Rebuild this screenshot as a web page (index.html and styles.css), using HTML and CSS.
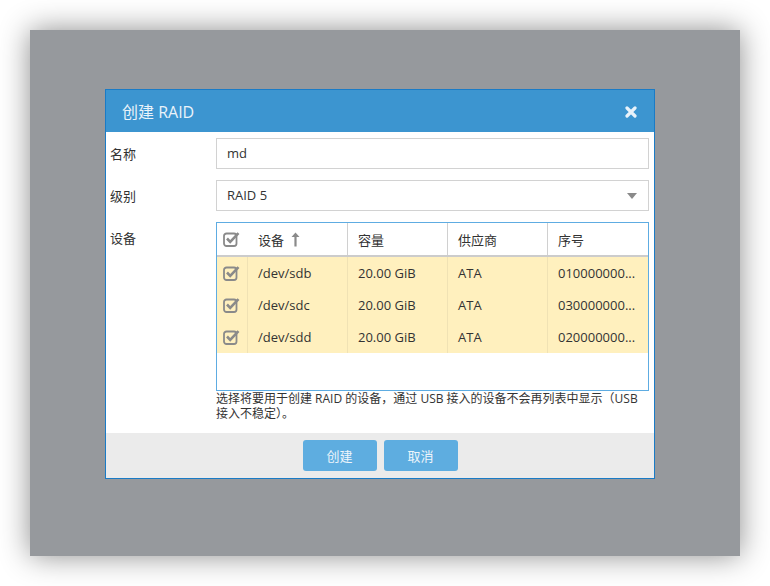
FILE: index.html
```html
<!DOCTYPE html>
<html>
<head>
<meta charset="utf-8">
<link rel="stylesheet" href="styles.css">
</head>
<body>
<div class="stage">
  <div class="dialog">
    <div class="dlg-head">
      <span class="dlg-title">创建 RAID</span>
      <svg class="close" width="12" height="12" viewBox="0 0 12 12"><path d="M2 2 L10 10 M10 2 L2 10" stroke="#e8f2fa" stroke-width="3.2" stroke-linecap="round"/></svg>
    </div>
    <div class="dlg-body">
      <div class="row">
        <div class="label">名称</div>
        <div class="field"><div class="input">md</div></div>
      </div>
      <div class="row">
        <div class="label">级别</div>
        <div class="field"><div class="input select"><span>RAID 5</span><span class="caret"></span></div></div>
      </div>
      <div class="row">
        <div class="label">设备</div>
        <div class="field">
          <div class="table">
            <div class="thead">
              <div class="c c0"><svg class="chk" width="17" height="16" viewBox="0 0 17 16"><rect x="1" y="2.5" width="12.5" height="12.5" rx="2.5" fill="none" stroke="#8a8a8a" stroke-width="1.8"/><path d="M4 7.5 L7.2 10.8 L15.5 2.2" fill="none" stroke="#8a8a8a" stroke-width="2.6"/></svg></div>
              <div class="c">设备<svg class="sort" width="9" height="15" viewBox="0 0 9 15"><path d="M4.5 0.5 L8.5 5 L5.6 5 L5.6 14.5 L3.4 14.5 L3.4 5 L0.5 5 Z" fill="#8a8a8a"/></svg></div>
              <div class="c">容量</div>
              <div class="c">供应商</div>
              <div class="c last">序号</div>
            </div>
            <div class="tr">
              <div class="c c0"><svg class="chk" width="17" height="16" viewBox="0 0 17 16"><rect x="1" y="2.5" width="12.5" height="12.5" rx="2.5" fill="none" stroke="#8a8a8a" stroke-width="1.8"/><path d="M4 7.5 L7.2 10.8 L15.5 2.2" fill="none" stroke="#8a8a8a" stroke-width="2.6"/></svg></div>
              <div class="c">/dev/sdb</div>
              <div class="c">20.00 GiB</div>
              <div class="c">ATA</div>
              <div class="c last">010000000...</div>
            </div>
            <div class="tr">
              <div class="c c0"><svg class="chk" width="17" height="16" viewBox="0 0 17 16"><rect x="1" y="2.5" width="12.5" height="12.5" rx="2.5" fill="none" stroke="#8a8a8a" stroke-width="1.8"/><path d="M4 7.5 L7.2 10.8 L15.5 2.2" fill="none" stroke="#8a8a8a" stroke-width="2.6"/></svg></div>
              <div class="c">/dev/sdc</div>
              <div class="c">20.00 GiB</div>
              <div class="c">ATA</div>
              <div class="c last">030000000...</div>
            </div>
            <div class="tr">
              <div class="c c0"><svg class="chk" width="17" height="16" viewBox="0 0 17 16"><rect x="1" y="2.5" width="12.5" height="12.5" rx="2.5" fill="none" stroke="#8a8a8a" stroke-width="1.8"/><path d="M4 7.5 L7.2 10.8 L15.5 2.2" fill="none" stroke="#8a8a8a" stroke-width="2.6"/></svg></div>
              <div class="c">/dev/sdd</div>
              <div class="c">20.00 GiB</div>
              <div class="c">ATA</div>
              <div class="c last">020000000...</div>
            </div>
          </div>
          <div class="help">选择将要用于创建 RAID 的设备，通过 USB 接入的设备不会再列表中显示（USB 接入不稳定）。</div>
        </div>
      </div>
    </div>
    <div class="dlg-foot">
      <button class="btn">创建</button>
      <button class="btn">取消</button>
    </div>
  </div>
</div>
</body>
</html>
```
FILE: styles.css
```css
html, body {
  margin: 0;
  padding: 0;
  background: #ffffff;
}
body {
  width: 770px;
  height: 586px;
  overflow: hidden;
  font-family: "Open Sans", "Noto Sans CJK SC", sans-serif;
  font-size: 13px;
  color: #333;
}
.stage {
  margin: 30px 0 0 30px;
  width: 710px;
  height: 526px;
  background: #96999d;
  box-shadow: 0 0 28px rgba(0, 0, 0, 0.45);
  padding: 59px 0 0 75px;
  box-sizing: border-box;
}
.dialog {
  width: 550px;
  height: 390px;
  box-sizing: border-box;
  border: 1px solid #1a7bc6;
  background: #fff;
  display: flex;
  flex-direction: column;
}
.dlg-head {
  height: 42px;
  background: #3c95d0;
  display: flex;
  align-items: center;
  justify-content: space-between;
  padding: 0 17px 0 16px;
}
.dlg-title {
  color: #eaf3fa;
  font-size: 16px;
}
.close {
  display: block;
  margin-top: 2px;
}
.dlg-body {
  flex: 1;
  padding: 6px 5px 0 4px;
  display: flex;
  flex-direction: column;
  gap: 11px;
}
.row {
  display: grid;
  grid-template-columns: 106px 1fr;
}
.label {
  padding-top: 7px;
  line-height: 18px;
}
.input {
  height: 31px;
  box-sizing: border-box;
  border: 1px solid #d2d2d2;
  padding: 0 10px;
  line-height: 29px;
  display: flex;
  justify-content: space-between;
  align-items: center;
}
.caret {
  width: 0;
  height: 0;
  border-left: 5px solid transparent;
  border-right: 5px solid transparent;
  border-top: 6px solid #8a8a8a;
  margin-right: 1px;
}
.table {
  height: 169px;
  box-sizing: border-box;
  border: 1px solid #5eace2;
}
.thead, .tr {
  display: grid;
  grid-template-columns: 31px 100px 100px 100px 100px;
}
.thead {
  height: 34px;
  box-sizing: border-box;
  border-bottom: 2px solid #cccccc;
}
.thead .c {
  border-right: 1px solid #d0d0d0;
}
.thead .c0 {
  border-right: none;
}
.tr {
  height: 32px;
  background: #fff0be;
}
.tr .c {
  border-right: 1px solid #f0e2b4;
}
.c {
  display: flex;
  align-items: center;
  padding-left: 10px;
  white-space: nowrap;
  overflow: hidden;
}
.c.last {
  border-right: none !important;
}
.c0 {
  padding-left: 6px;
}
.chk {
  display: block;
}
.sort {
  display: block;
  margin-left: 7px;
}
.help {
  font-size: 12px;
  line-height: 15px;
  margin-top: 0px;
  color: #333;
}
.dlg-foot {
  height: 45px;
  background: #ebebeb;
  display: flex;
  justify-content: center;
  align-items: flex-start;
  gap: 7px;
  padding-top: 7px;
  box-sizing: border-box;
}
.btn {
  width: 74px;
  height: 31px;
  border: none;
  border-radius: 3px;
  background: #5eade0;
  color: #eef5fb;
  font-family: "Open Sans", "Noto Sans CJK SC", sans-serif;
  font-size: 13px;
  padding: 0;
}
```
